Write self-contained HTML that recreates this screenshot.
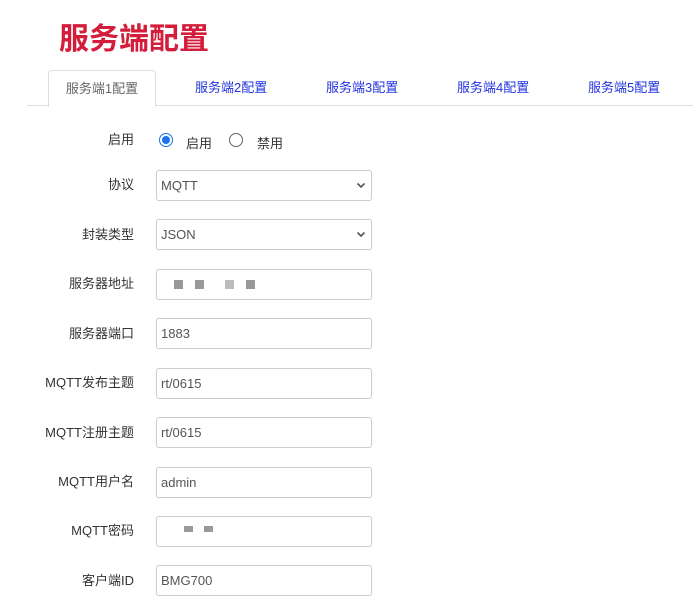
<!DOCTYPE html>
<html><head><meta charset="utf-8"><style>
body{margin:0;width:693px;height:614px;background:#fff;font-family:"Liberation Sans","Noto Sans CJK SC",sans-serif;position:relative;overflow:hidden}
.a{position:absolute}
h1{position:absolute;left:59px;top:20px;margin:0;font-size:30px;font-weight:bold;color:#d41d3b;line-height:40px}
.line{left:27px;right:0;top:105px;height:1px;background:#ddd}
.tab{top:70px;height:36px;line-height:36px;font-size:13px;color:#2233dd}
.act{left:48px;width:106px;border:1px solid #ddd;border-bottom:1px solid #fff;border-radius:4px 4px 0 0;background:#fff;text-align:center;color:#666;height:35px}
.lab{left:0;width:134px;text-align:right;font-size:13px;color:#333;line-height:16px}
.in{left:156px;border:1px solid #ccc;border-radius:3px;font-size:13px;color:#555;line-height:29px;padding-left:4px;box-sizing:border-box;width:216px;height:31px}
.chev{position:absolute;right:5px;top:9px}
.blk{position:absolute;background:#999;width:9px;height:9px;top:10px}
</style></head><body>
<h1>服务端配置</h1>
<div class="a line"></div>
<div class="a tab act">服务端1配置</div>
<div class="a tab" style="left:195px">服务端2配置</div>
<div class="a tab" style="left:326px">服务端3配置</div>
<div class="a tab" style="left:457px">服务端4配置</div>
<div class="a tab" style="left:588px">服务端5配置</div>

<div class="a lab" style="top:132px">启用</div>
<div class="a" style="left:159px;top:133px;width:14px;height:14px;border-radius:50%;border:1px solid #1a73e8;box-sizing:border-box;background:#fff"><div style="position:absolute;left:2px;top:2px;width:8px;height:8px;border-radius:50%;background:#1a73e8"></div></div>
<div class="a" style="left:186px;top:133px;font-size:13px;color:#333">启用</div>
<div class="a" style="left:229px;top:133px;width:14px;height:14px;border-radius:50%;border:1px solid #666;box-sizing:border-box"></div>
<div class="a" style="left:257px;top:133px;font-size:13px;color:#333">禁用</div>

<div class="a lab" style="top:177px">协议</div>
<div class="a in" style="top:170px">MQTT<svg class="chev" width="10" height="10" viewBox="0 0 10 10"><path d="M1.5 3.5L5 7L8.5 3.5" fill="none" stroke="#555" stroke-width="1.6"/></svg></div>
<div class="a lab" style="top:227px">封装类型</div>
<div class="a in" style="top:219px">JSON<svg class="chev" width="10" height="10" viewBox="0 0 10 10"><path d="M1.5 3.5L5 7L8.5 3.5" fill="none" stroke="#555" stroke-width="1.6"/></svg></div>
<div class="a lab" style="top:276px">服务器地址</div>
<div class="a in" style="top:269px"><span class="blk" style="left:17px"></span><span class="blk" style="left:38px"></span><span class="blk" style="left:68px;background:#bbb"></span><span class="blk" style="left:89px"></span></div>
<div class="a lab" style="top:326px">服务器端口</div>
<div class="a in" style="top:318px">1883</div>
<div class="a lab" style="top:375px">MQTT发布主题</div>
<div class="a in" style="top:368px">rt/0615</div>
<div class="a lab" style="top:425px">MQTT注册主题</div>
<div class="a in" style="top:417px">rt/0615</div>
<div class="a lab" style="top:474px">MQTT用户名</div>
<div class="a in" style="top:467px">admin</div>
<div class="a lab" style="top:523px">MQTT密码</div>
<div class="a in" style="top:516px"><span class="blk" style="left:27px;top:9px;height:6px"></span><span class="blk" style="left:47px;top:9px;height:6px"></span></div>
<div class="a lab" style="top:573px">客户端ID</div>
<div class="a in" style="top:565px">BMG700</div>
</body></html>
